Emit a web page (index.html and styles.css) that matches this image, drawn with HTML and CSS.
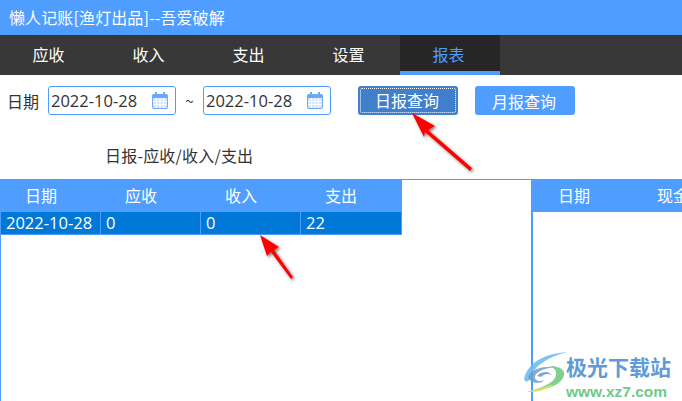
FILE: index.html
```html
<!DOCTYPE html>
<html lang="zh">
<head>
<meta charset="utf-8">
<title>懒人记账</title>
<link rel="stylesheet" href="styles.css">
</head>
<body>
<div class="app">
  <header class="titlebar">懒人记账[渔灯出品]--吾爱破解</header>
  <nav class="tabs">
    <div class="tab">应收</div>
    <div class="tab">收入</div>
    <div class="tab">支出</div>
    <div class="tab">设置</div>
    <div class="tab active">报表</div>
  </nav>
  <section class="toolbar">
    <span class="label">日期</span>
    <div class="date"><span>2022-10-28</span>
      <svg class="cal" width="16" height="17" viewBox="0 0 16 17"><rect x="0.5" y="2.5" width="15" height="14" rx="1.5" fill="#d5e6fc" stroke="#6aaaf5"/><rect x="0.5" y="2.5" width="15" height="3.5" fill="#6aaaf5"/><path d="M3 0h2v4H3zM11 0h2v4h-2z" fill="#6aaaf5"/><path d="M1 9.5h14M1 12.5h14M4.5 6v10M8 6v10M11.5 6v10" stroke="#fff" stroke-width="1"/></svg>
    </div>
    <span class="tilde">~</span>
    <div class="date"><span>2022-10-28</span>
      <svg class="cal" width="16" height="17" viewBox="0 0 16 17"><rect x="0.5" y="2.5" width="15" height="14" rx="1.5" fill="#d5e6fc" stroke="#6aaaf5"/><rect x="0.5" y="2.5" width="15" height="3.5" fill="#6aaaf5"/><path d="M3 0h2v4H3zM11 0h2v4h-2z" fill="#6aaaf5"/><path d="M1 9.5h14M1 12.5h14M4.5 6v10M8 6v10M11.5 6v10" stroke="#fff" stroke-width="1"/></svg>
    </div>
    <button class="btn focus"><span class="dots">日报查询</span></button>
    <button class="btn second">月报查询</button>
  </section>
  <h2 class="heading">日报-应收/收入/支出</h2>
  <section class="panels">
    <div class="left">
      <div class="grid">
        <div class="row head"><div>日期</div><div>应收</div><div>收入</div><div>支出</div></div>
        <div class="row sel"><div>2022-10-28</div><div>0</div><div>0</div><div>22</div></div>
      </div>
    </div>
    <div class="right">
      <div class="rhead"><div>日期</div><div class="rcash">现金</div></div>
    </div>
  </section>
  <svg class="overlay" width="682" height="401" viewBox="0 0 682 401">
    <defs><filter id="sh" x="-30%" y="-30%" width="160%" height="160%"><feDropShadow dx="1.5" dy="1.5" stdDeviation="1.5" flood-color="#000" flood-opacity="0.55"/></filter></defs>
    <g filter="url(#sh)" fill="#f00" stroke="none">
      <path d="M412 113L435 126L428 130L472 168L470 171L425 132L424 137Z"/>
      <path d="M260 235L279 247L274 250L293 277L291 279L271 252L267 256Z"/>
    </g>
  </svg>
  <div class="wm">
    <svg class="wmlogo" width="46" height="44" viewBox="0 0 46 44">
      <path d="M1 28C4 14 18 3 44 1C26 6 12 14 9 24C7 30 3 33 1 28Z" fill="#72bdf0" opacity=".9"/>
      <path d="M5 26C8 18 20 15 33 16C22 17 14 20 12 25C11 30 17 31 22 29C16 34 7 32 5 26Z" fill="#6f9bd0" opacity=".85"/>
      <path d="M14 25C18 20 27 20 28 24C25 22 21 23 18 26Z" fill="#5a8fd0" opacity=".8"/>
      <path d="M27 15C38 15 44 20 40 27C36 35 22 39 4 41C18 37 32 32 33 24C34 20 31 17 27 15Z" fill="#72cc85" opacity=".9"/>
      <path d="M4 41C14 38 24 36 30 33C26 38 14 42 4 41Z" fill="#dfe35a" opacity=".9"/>
    </svg>
    <div class="wmtext">
      <div class="wm1">极光下载站</div>
      <div class="wm2">www.xz7.com</div>
    </div>
  </div>
</div>
</body>
</html>
```
FILE: styles.css
```css
* { box-sizing: border-box; }
html, body { margin: 0; padding: 0; background: #fff; }
.app {
  position: relative;
  width: 682px;
  height: 401px;
  overflow: hidden;
  font-family: "Noto Sans CJK SC", "Liberation Sans", sans-serif;
  font-size: 16px;
  color: #333;
}
.titlebar {
  height: 35px;
  background: #4f9eff;
  color: #fff;
  font-size: 16px;
  line-height: 34px;
  padding-left: 9px;
  letter-spacing: 0.12px;
}
.tabs {
  display: flex;
  height: 40px;
  background: #383838;
}
.tab {
  width: 100px;
  padding-right: 3px;
  color: #fff;
  text-align: center;
  line-height: 39px;
}
.tab.active {
  background: #262626;
  color: #4f9eff;
  border-bottom: 4px solid #4f9eff;
}
.toolbar {
  display: flex;
  align-items: center;
  height: 29px;
  margin-top: 11px;
  padding-left: 8px;
}
.label { width: 40px; margin-left: -1px; padding-right: 0; flex: none; width: 41px; }
.date {
  width: 128px;
  height: 29px;
  border: 1px solid #4f9eff;
  border-radius: 3px;
  display: flex;
  align-items: center;
  justify-content: space-between;
  padding: 0 7px 0 2px;
  font-family: "Open Sans", sans-serif;
  font-size: 16.5px;
}
.cal { display: block; }
.tilde { width: 27px; text-align: center; font-size: 15px; }
.btn {
  width: 100px;
  height: 29px;
  border: 0;
  border-radius: 3px;
  background: #4f9eff;
  color: #fff;
  font: inherit;
  padding: 0 2px 0 0;
  margin-left: 17px;
}
.btn.focus {
  margin-left: 27px;
  background: #3f7fcc;
  padding: 2px;
}
.dots {
  display: block;
  height: 100%;
  border: 1px dotted #fff;
  border-radius: 2px;
  line-height: 23px;
  padding-right: 2px;
}
.heading {
  margin: 29px 0 0;
  height: 22px;
  padding-left: 105px;
  font-weight: 400;
  font-size: 16px;
  line-height: 22px;
  letter-spacing: 0.2px;
  color: #333;
}
.panels {
  display: flex;
  margin-top: 13px;
  height: 222px;
}
.left {
  flex: none;
  width: 532px;
  border-top: 1px solid #4f9eff;
  border-left: 1px solid #4f9eff;
}
.grid { width: 402px; margin-top: -1px; margin-left: -1px; }
.row { display: grid; }
.row.head {
  grid-template-columns: repeat(4, 100px);
  height: 33px;
  background: #4f9eff;
  color: #fff;
  text-align: center;
  line-height: 33px;
}
.row.head > div { padding-right: 18px; }
.row.sel {
  height: 23px;
  width: 402px;
  background: #0078d7;
  color: #fff;
  border: 1px solid #4f9eff;
  border-top: 0;
  grid-template-columns: 100px 100px 100px 100px;
  font-family: "Open Sans", sans-serif;
  font-size: 16.5px;
  line-height: 22px;
}
.row.sel > div { padding-left: 5px; border-right: 1px solid #4f9eff; }
.row.sel > div:last-child { border-right: 0; }
.right {
  flex: 1;
  min-width: 0;
  overflow: hidden;
  border-left: 2px solid #4f9eff;
  margin-left: -1px;
}
.rhead {
  display: grid;
  grid-template-columns: 82px 100px;
  width: 182px;
  height: 33px;
  background: #4f9eff;
  color: #fff;
  line-height: 33px;
  text-align: center;
}
.rcash { padding-left: 16px; }
.overlay { position: absolute; left: 0; top: 0; pointer-events: none; }
.wm {
  position: absolute;
  left: 523px;
  top: 350px;
  width: 159px;
  height: 51px;
}
.wmlogo { position: absolute; left: 0; top: 1px; }
.wmtext { position: absolute; left: 43px; top: 0; }
.wm1 { color: #5f9bd8; font-size: 21px; font-weight: 700; line-height: 32px; white-space: nowrap; }
.wm2 { color: #6fc98a; font-size: 15.5px; font-weight: 700; line-height: 20px; font-family: "Liberation Sans", sans-serif; white-space: nowrap; }
```
